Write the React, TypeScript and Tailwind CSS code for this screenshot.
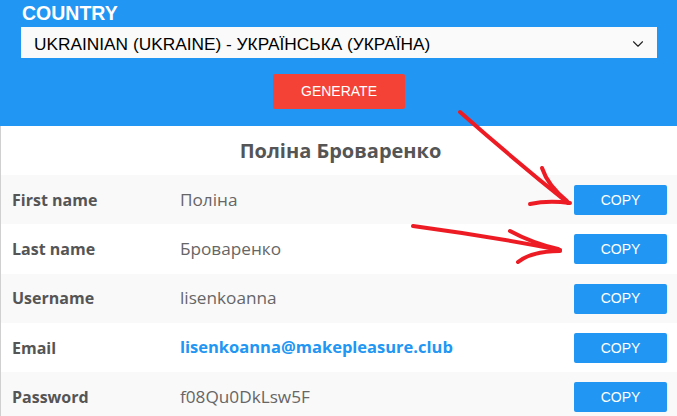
import { ChevronDown } from "lucide-react"

interface Field {
  label: string
  value: string
  link?: boolean
}

const fields: Field[] = [
  { label: "First name", value: "Поліна" },
  { label: "Last name", value: "Броваренко" },
  { label: "Username", value: "lisenkoanna" },
  { label: "Email", value: "lisenkoanna@makepleasure.club", link: true },
  { label: "Password", value: "f08Qu0DkLsw5F" },
]

export default function App() {
  return (
    <div className="relative w-[677px] h-[416px] overflow-hidden bg-white">
      {/* Header */}
      <div className="bg-[#2196f3] h-[126px] pt-[3px] font-['Liberation_Sans',Arial,sans-serif]">
        <div className="ml-[22px] text-[19.5px] leading-[20px] font-bold text-white">COUNTRY</div>
        <div className="ml-[21px] mt-[4px] w-[636px] h-[31px] bg-[#fafafa] flex items-start justify-between pt-[4px] pl-[13px] pr-[10px]">
          <span className="text-[17.3px] leading-[27px] text-black">UKRAINIAN (UKRAINE) - УКРАЇНСЬКА (УКРАЇНА)</span>
          <ChevronDown className="w-[18px] h-[18px] mt-[4px] text-[#222]" strokeWidth={1.5} />
        </div>
        <div className="flex justify-center mt-[16px]">
          <button className="w-[132px] h-[35px] bg-[#f44336] rounded-[2px] text-white text-[14px] leading-[35px] pl-[1px]">
            GENERATE
          </button>
        </div>
      </div>

      {/* Profile */}
      <div className="border-l border-[#d0d0d0] font-['Open_Sans',sans-serif]">
        <div className="h-[49px] flex items-center justify-center pl-[3px] text-[20px] font-bold text-[#555]">
          Поліна Броваренко
        </div>
        {fields.map((f, i) => (
          <div
            key={f.label}
            className={`h-[49.3px] flex items-center pr-[10px] ${i % 2 === 0 ? "bg-[#f9f9f9]" : "bg-white"}`}
          >
            <div className="w-[179px] pl-[11px] text-[16px] font-bold text-[#555]">{f.label}</div>
            <div
              className={`flex-1 ${f.link ? "text-[16.5px] font-bold text-[#2196f3]" : "text-[17.2px] text-[#666]"}`}
            >
              {f.value}
            </div>
            <button className="w-[93px] h-[30px] bg-[#2196f3] rounded-[2px] text-white text-[14px] font-['Liberation_Sans',Arial,sans-serif] mt-[1px]">
              COPY
            </button>
          </div>
        ))}
      </div>

      {/* Hand-drawn arrows */}
      <svg
        className="absolute inset-0 pointer-events-none"
        width="677"
        height="416"
        viewBox="0 0 677 416"
        fill="none"
        stroke="#ed1c24"
        strokeWidth="4"
        strokeLinecap="round"
        strokeLinejoin="round"
      >
        <path d="M460 112 Q 512 158 568 203" />
        <path d="M542 168 Q 548 186 567 201" />
        <path d="M530 204 Q 548 200 570 203" />
        <path d="M413 226 Q 488 236 560 250" />
        <path d="M510 231 Q 532 243 558 249" />
        <path d="M518 262 Q 532 251 560 251" />
      </svg>
    </div>
  )
}
